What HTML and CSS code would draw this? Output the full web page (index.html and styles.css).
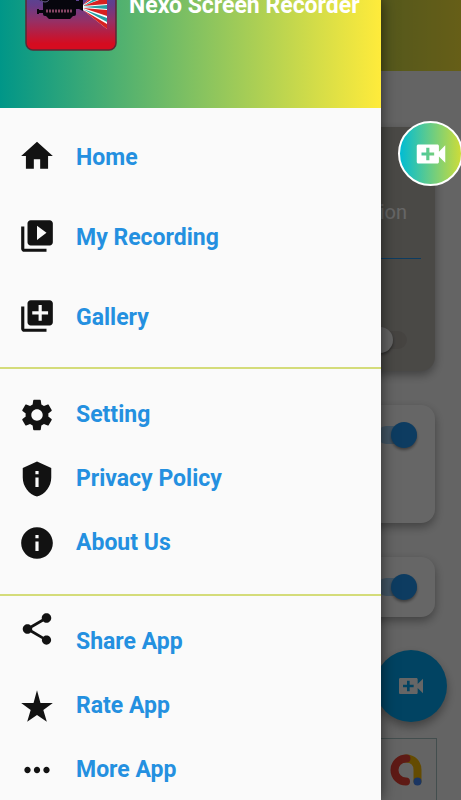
FILE: index.html
```html
<!DOCTYPE html>
<html lang="en">
<head>
<meta charset="utf-8">
<meta name="viewport" content="width=device-width, initial-scale=1">
<title>Nexo Screen Recorder</title>
<link rel="stylesheet" href="styles.css">
</head>
<body>
<div class="app">
  <main class="page">
    <div class="appbar"></div>
    <div class="content">
      <section class="card card-muted">
        <label class="card-title" for="orient">Orientation</label>
        <hr class="card-rule">
        <input class="switch switch-low" id="orient" type="checkbox">
      </section>
      <section class="card card-tall">
        <input class="switch" type="checkbox" aria-label="Audio" checked>
      </section>
      <section class="card">
        <input class="switch" type="checkbox" aria-label="Floating button" checked>
      </section>
      <button class="fab" type="button" aria-label="Record">
        <svg class="fab-icon" viewBox="0 0 24 24"><path fill="currentColor" d="M17 10.500V7c0-.55-.45-1-1-1H4c-.55 0-1 .45-1 1v10c0 .55.45 1 1 1h12c.55 0 1-.45 1-1v-3.500l4 4v-11l-4 4zM14 13h-3v3H9v-3H6v-2h3V8h2v3h3v2z"/></svg>
      </button>
      <div class="ad">
        <svg class="ad-logo" viewBox="0 0 32 32" fill="none" stroke-width="8" stroke-linecap="round">
          <path stroke="#fbbc04" d="M16 4.500C23 4.500 27.500 9.500 27.500 16V27"/>
          <path stroke="#ea4335" d="M16.500 4.500C9.500 4.500 4.500 9.600 4.500 16S9.500 27.500 16 27.500"/>
          <circle cx="27.500" cy="27.500" r="4" fill="#4285f4"/>
        </svg>
      </div>
    </div>
  </main>
  <div class="scrim"></div>

  <aside class="drawer">
    <header class="drawer-head">
      <svg class="logo" viewBox="0 0 92 92">
        <defs>
          <linearGradient id="logoFill" x1="0" y1="0" x2="0" y2="1">
            <stop offset="0" stop-color="#1769b5"/>
            <stop offset=".5" stop-color="#653d8b"/>
            <stop offset=".68" stop-color="#963065"/>
            <stop offset=".93" stop-color="#d50c20"/>
          </linearGradient>
        </defs>
        <rect x="1" y="1" width="90" height="90" rx="7" fill="url(#logoFill)" stroke="#5b2935" stroke-width="1.500"/>
        <path fill="#fff" d="M58 46L82 22V70L58 51z"/>
        <path fill="#d8201f" d="M58 46L82 22V31zM58 47L82 38V45zM58 49L82 51V57zM58 51L82 65V70z"/>
        <path fill="#26a0a3" d="M58 47L82 32V37zM58 48L82 46V50zM58 50L82 59V63z"/>
        <g fill="#07060d">
          <circle cx="21" cy="31" r="12"/><circle cx="42" cy="31" r="10"/>
          <rect x="18" y="36" width="33" height="21" rx="2"/>
          <path d="M51 42h3v-2l4-2v14l-4-2h-3zM13 51h5v3h-5zM12 50h2v5h-2zM21 57h27l-3 3H24z"/>
        </g>
        <circle cx="20" cy="38" r="5" fill="none" stroke="#69608c"/>
        <path stroke="#854665" stroke-width="3" stroke-dasharray="2 1" d="M21 52H48"/>
      </svg>
      <h1 class="drawer-title">Nexo Screen Recorder</h1>
    </header>
    <nav>
      <div class="group group-wide">
        <a class="item" href="#"><svg class="icon" viewBox="0 0 24 24"><path d="M10 20v-6h4v6h5v-8h3L12 3 2 12h3v8z"/></svg><span>Home</span></a>
        <a class="item" href="#"><svg class="icon" viewBox="0 0 24 24"><path d="M4 6H2v14c0 1.100.9 2 2 2h14v-2H4V6zm16-4H8c-1.100 0-2 .9-2 2v12c0 1.100.9 2 2 2h12c1.100 0 2-.9 2-2V4c0-1.100-.9-2-2-2zm-8 12.500v-9l6 4.500-6 4.500z"/></svg><span>My Recording</span></a>
        <a class="item" href="#"><svg class="icon" viewBox="0 0 24 24"><path d="M4 6H2v14c0 1.100.9 2 2 2h14v-2H4V6zm16-4H8c-1.100 0-2 .9-2 2v12c0 1.100.9 2 2 2h12c1.100 0 2-.9 2-2V4c0-1.100-.9-2-2-2zm-1 9h-4v4h-2v-4H9V9h4V5h2v4h4v2z"/></svg><span>Gallery</span></a>
      </div>
      <div class="group">
        <a class="item" href="#"><svg class="icon" viewBox="0 0 24 24"><path d="M19.140 12.940c.04-.3.060-.61.060-.94 0-.32-.020-.64-.070-.94l2.030-1.580c.18-.14.23-.41.120-.61l-1.920-3.320c-.12-.22-.37-.29-.59-.22l-2.390.96c-.5-.38-1.030-.7-1.620-.94l-.36-2.540c-.04-.24-.24-.41-.48-.41h-3.840c-.24 0-.43.17-.47.41l-.36 2.540c-.59.24-1.130.57-1.620.94l-2.390-.96c-.22-.08-.47 0-.59.22L2.740 8.870c-.12.21-.08.47.12.61l2.030 1.580c-.05.3-.09.63-.09.94s.02.64.07.94l-2.030 1.580c-.18.14-.23.41-.12.61l1.920 3.320c.12.22.37.29.59.22l2.390-.96c.5.38 1.030.7 1.620.94l.36 2.540c.05.24.24.41.48.41h3.840c.24 0 .44-.17.47-.41l.36-2.540c.59-.24 1.130-.56 1.620-.94l2.390.96c.22.08.47 0 .59-.22l1.920-3.320c.12-.22.07-.47-.12-.61l-2.010-1.580zM12 15.600c-1.980 0-3.600-1.620-3.600-3.600s1.620-3.600 3.600-3.600 3.600 1.620 3.600 3.600-1.620 3.600-3.600 3.600z"/></svg><span>Setting</span></a>
        <a class="item" href="#"><svg class="icon" viewBox="0 0 24 24"><path d="M12 1L3 5v6c0 5.550 3.840 10.740 9 12 5.160-1.260 9-6.450 9-12V5l-9-4zm-1 6h2v2h-2V7zm0 4h2v6h-2v-6z"/></svg><span>Privacy Policy</span></a>
        <a class="item" href="#"><svg class="icon" viewBox="0 0 24 24"><path d="M12 2C6.480 2 2 6.480 2 12s4.480 10 10 10 10-4.480 10-10S17.520 2 12 2zm1 15h-2v-6h2v6zm0-8h-2V7h2v2z"/></svg><span>About Us</span></a>
      </div>
      <div class="group">
        <a class="item" href="#"><svg class="icon icon-top" viewBox="0 0 24 24"><path d="M18 16.080c-.76 0-1.440.3-1.960.77L8.910 12.700c.05-.23.09-.46.09-.7s-.04-.47-.09-.7l7.050-4.110c.54.5 1.250.81 2.040.81 1.660 0 3-1.340 3-3s-1.340-3-3-3-3 1.340-3 3c0 .24.04.47.09.7L8.040 9.810C7.500 9.310 6.790 9 6 9c-1.660 0-3 1.340-3 3s1.340 3 3 3c.79 0 1.500-.31 2.040-.81l7.120 4.160c-.05.21-.08.43-.08.65 0 1.610 1.310 2.920 2.920 2.920s2.920-1.310 2.920-2.920-1.310-2.920-2.920-2.920z"/></svg><span>Share App</span></a>
        <a class="item" href="#"><svg class="icon" viewBox="0 0 24 24"><path d="M12 2l2.200 8.100H22l-6 4.400L18.200 22 12 17.700 5.800 22 8 14.500l-6-4.400h7.800z"/></svg><span>Rate App</span></a>
        <a class="item" href="#"><svg class="icon" viewBox="0 0 24 24"><path d="M6 10c-1.100 0-2 .9-2 2s.9 2 2 2 2-.9 2-2-.9-2-2-2zm12 0c-1.100 0-2 .9-2 2s.9 2 2 2 2-.9 2-2-.9-2-2-2zm-6 0c-1.100 0-2 .9-2 2s.9 2 2 2 2-.9 2-2-.9-2-2-2z"/></svg><span>More App</span></a>
      </div>
    </nav>
  </aside>

  <button class="bubble" type="button" aria-label="Start recording">
    <svg class="bubble-icon" viewBox="0 0 24 24"><path fill="currentColor" d="M17 10.500V7c0-.55-.45-1-1-1H4c-.55 0-1 .45-1 1v10c0 .55.45 1 1 1h12c.55 0 1-.45 1-1v-3.500l4 4v-11l-4 4zM14 13h-3v3H9v-3H6v-2h3V8h2v3h3v2z"/></svg>
  </button>
</div>
</body>
</html>
```
FILE: styles.css
```css
* { box-sizing: border-box; }

body {
  margin: 0;
  font-family: Roboto, "Liberation Sans", sans-serif;
  background: #fafafa;
}

.app {
  position: relative;
  height: 100vh;
  overflow: hidden;
}

/* Page under the drawer */
.appbar {
  height: 71px;
  background: linear-gradient(90deg, #009688, #ffeb3b);
}

.content {
  display: flex;
  flex-direction: column;
  gap: 34px;
  padding: 56px 26px 0;
}

.card {
  display: flex;
  flex-direction: column;
  align-items: flex-end;
  min-height: 60px;
  padding: 17px 18px;
  border-radius: 14px;
  background: #fff;
  box-shadow: 0 4px 10px rgba(0, 0, 0, 0.35);
}

.card-tall { min-height: 118px; }

.card-muted {
  min-height: 244px;
  padding: 72px 14px 18px;
  background: #bab6b0;
}

.card-title {
  margin-right: 14px;
  font-size: 20px;
  line-height: 26px;
  color: #fff;
}

.card-rule {
  width: 100%;
  height: 1px;
  margin: 33px 0 0;
  border: 0;
  background: #2196f3;
}

.switch {
  appearance: none;
  display: flex;
  align-items: center;
  width: 40px;
  height: 18px;
  margin: 4px 0;
  border-radius: 9px;
  background: #aeaaa4;
}

.switch::before {
  content: "";
  width: 26px;
  height: 26px;
  flex: none;
  border-radius: 50%;
  background: #fafafa;
  box-shadow: 0 2px 3px rgba(0, 0, 0, 0.4);
}

.switch:checked {
  justify-content: flex-end;
  background: #a6d5fa;
}

.switch:checked::before { background: #2196f3; }

.switch-low { margin: auto 14px 4px 0; }

.fab {
  display: grid;
  place-items: center;
  align-self: flex-end;
  width: 72px;
  height: 72px;
  margin: -1px -12px 0 0;
  padding: 0;
  border: 0;
  border-radius: 50%;
  color: #fff;
  background: #03a9f4;
  box-shadow: 0 5px 10px rgba(0, 0, 0, 0.35);
}

.fab-icon { width: 32px; height: 32px; }

.ad {
  display: flex;
  justify-content: flex-end;
  height: 80px;
  margin: -18px -2px 0;
  padding: 15px 14px;
  border: 1px solid #a9c4c4;
}

.ad-logo { width: 32px; height: 32px; }

.scrim {
  position: absolute;
  inset: 0;
  background: rgba(0, 0, 0, 0.6);
}

/* Drawer */
.drawer {
  position: absolute;
  inset: 0 80px 0 0;
  overflow: hidden;
  background: #fafafa;
  box-shadow: 0 0 14px rgba(0, 0, 0, 0.6);
}

.drawer-head {
  display: flex;
  align-items: center;
  gap: 12px;
  margin-top: -65px;
  padding: 24px 20px 57px 25px;
  background: linear-gradient(90deg, #009688, #ffeb3b);
}

.logo { width: 92px; height: 92px; flex: none; }

.drawer-title {
  margin: 0;
  padding-top: 2px;
  font-size: 23px;
  line-height: 28px;
  font-weight: 700;
  white-space: nowrap;
  color: #fff;
}

.group { padding: 14px 0 19px; }

.group-wide { padding: 8px 0 11px; }

.group + .group { border-top: 2px solid #d4dc7a; }

.item {
  display: flex;
  align-items: center;
  gap: 20px;
  height: 64px;
  padding: 0 18px;
  font-size: 23px;
  line-height: 28px;
  font-weight: 700;
  color: #2490e0;
  text-decoration: none;
}

.group-wide .item { height: 80px; }

.group-wide span { padding-top: 3px; }

.icon {
  width: 38px;
  height: 38px;
  flex: none;
  fill: #121212;
}

.icon-top { align-self: flex-start; }

/* Floating record bubble */
.bubble {
  position: absolute;
  top: 121px;
  right: -2px;
  display: grid;
  place-items: center;
  width: 65px;
  height: 65px;
  padding: 0;
  border: 2px solid #fff;
  border-radius: 50%;
  color: #fff;
  background: linear-gradient(90deg, #00bcd4, #cddc39);
}

.bubble-icon { width: 38px; height: 38px; }
```
